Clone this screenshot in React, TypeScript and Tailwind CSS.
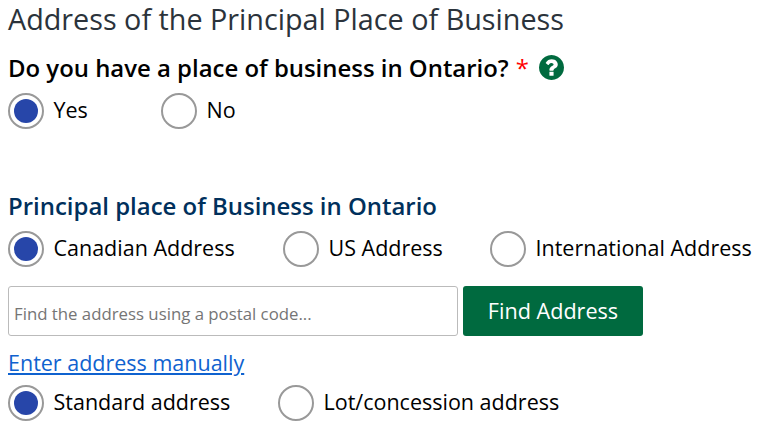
type RadioProps = { label: string; checked?: boolean; className?: string };

function Radio({ label, checked, className = '' }: RadioProps) {
  return (
    <div className={`flex h-9 items-center whitespace-nowrap ${className}`}>
      <span className="flex size-9 shrink-0 items-center justify-center rounded-full border-2 border-[#999] bg-white">
        {checked && <span className="size-6 rounded-full bg-[#2746a9]" />}
      </span>
      <span className="ml-[9.5px] pb-[3px] text-[21.5px] leading-8">{label}</span>
    </div>
  );
}

function HelpIcon() {
  return (
    <svg viewBox="128 128 1536 1536" className="mb-px ml-[10px] size-[25px] fill-[#006a3f]">
      <path d="M1024 1376v-192q0-14-9-23t-23-9h-192q-14 0-23 9t-9 23v192q0 14 9 23t23 9h192q14 0 23-9t9-23zm256-672q0-88-55.5-163t-138.5-116-170-41q-243 0-371 213-15 24 8 42l132 100q7 6 19 6 16 0 25-12 53-68 86-92 34-24 86-24 48 0 85.5 26t37.5 59q0 38-20 61t-68 45q-63 28-115.5 86.5t-52.5 125.5v36q0 14 9 23t23 9h192q14 0 23-9t9-23q0-19 21.5-49.5t54.5-49.5q32-18 49-28.5t46-35 44.5-48 28-60.5 12.5-81zm384 192q0 209-103 385.5t-279.5 279.5-385.5 103-385.5-103-279.5-279.5-103-385.5 103-385.5 279.5-279.5 385.5-103 385.5 103 279.5 279.5 103 385.5z" />
    </svg>
  );
}

export default function App() {
  return (
    <main className="h-[427px] w-[760px] overflow-hidden bg-white pl-2 font-['Open_Sans','Noto_Sans',sans-serif] text-black">
      <h1 className="h-[50px] text-[28.75px] leading-[38px] whitespace-nowrap text-[#2b333b]">
        Address of the Principal Place of Business
      </h1>
      <div className="flex h-9 items-center text-[23.93px] font-semibold whitespace-nowrap">
        <span className="pb-px">Do you have a place of business in Ontario?</span>
        <span className="ml-[7px] font-normal text-[#f00]">*</span>
        <HelpIcon />
      </div>
      <div className="mt-[7px] flex">
        <Radio label="Yes" checked className="w-[153px]" />
        <Radio label="No" />
      </div>
      <h2 className="mt-[59px] h-9 text-[23.95px] leading-9 font-semibold whitespace-nowrap text-[#00305c]">
        Principal place of Business in Ontario
      </h2>
      <div className="mt-[7px] flex">
        <Radio label="Canadian Address" checked className="w-[275px]" />
        <Radio label="US Address" className="w-[207px]" />
        <Radio label="International Address" />
      </div>
      <div className="mt-[19px] flex h-[50px] gap-[5px]">
        <input
          className="w-[450px] rounded-[3px] border border-[#bbb] px-[5px] pt-1.5 text-[16.8px] placeholder:text-[#757575]"
          placeholder="Find the address using a postal code..."
        />
        <button className="w-[180px] rounded-[3px] bg-[#006a3f] text-[21.6px] text-white">Find Address</button>
      </div>
      <div className="mt-[9px] h-9">
        <a href="#" className="text-[21.5px] leading-9 text-[#0f62cf] underline">Enter address manually</a>
      </div>
      <div className="mt-[4px] flex">
        <Radio label="Standard address" checked className="w-[270px]" />
        <Radio label="Lot/concession address" />
      </div>
    </main>
  );
}
